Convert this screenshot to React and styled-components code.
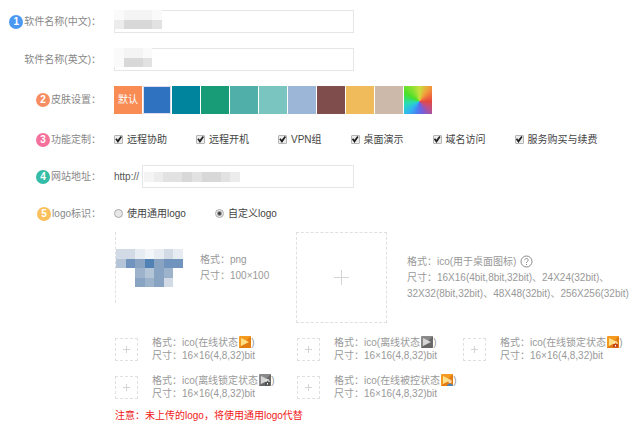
import styled, { createGlobalStyle, css } from "styled-components"
import React from 'react'

const skins = ['#2f73c0', '#00839c', '#189c78', '#50afa9', '#7ac5c0', '#9bb6d6', '#7f4e4c', '#f0bc5b', '#cdb9aa']

const features = ['远程协助', '远程开机', 'VPN组', '桌面演示', '域名访问', '服务购买与续费']

const icons = [
    { text: '在线状态', tone: 'orange' },
    { text: '离线状态', tone: 'gray' },
    { text: '在线锁定状态', tone: 'orange', mark: 'lock' },
    { text: '离线锁定状态', tone: 'gray', mark: 'lock' },
    { text: '在线被控状态', tone: 'orange', mark: 'user' },
]

// each string is a row of cells, each cell an index in the palette, "." is empty
const Mosaic = ({ rows, palette, width, height }) => {
    const cols = rows[0].length
    return (
        <svg width={width} height={height} viewBox={`0 0 ${cols} ${rows.length}`} preserveAspectRatio="none" shapeRendering="crispEdges" aria-hidden="true">
            {rows.map((row, y) => row.split('').map((c, x) => (
                c === '.' ? null : <rect key={`${x}-${y}`} x={x} y={y} width="1" height="1" fill={palette[c]} />
            )))}
        </svg>
    )
}

const grays = ['#fafafa', '#f4f4f4', '#ececec', '#e2e2e2', '#d8d8d8', '#cfcfcf']
const blues = ['#f3f6f9', '#e6ecf2', '#d2dbe5', '#b5c5d8', '#9db3cc', '#89a4c2', '#7094bd', '#5082b5']

const StateIcon = ({ tone, mark }) => {
    const gray = tone === 'gray'
    return (
        <StateSvg viewBox="0 0 12 12" aria-hidden="true">
            <rect x="0" y="0" width="12" height="12" rx="1" fill={gray ? '#8a8a8a' : '#f39a1f'} />
            <path d="M0 12 12 0v11a1 1 0 0 1-1 1z" fill={gray ? '#686868' : '#e37d12'} />
            <path d="M2 2 10 6 2 10z" fill={gray ? '#d6d6d6' : '#ffe08a'} />
            {mark === 'lock' && (
                <>
                    <path d="M7 8V7a1.500 1.500 0 0 1 3 0v1" fill="none" stroke={gray ? '#eee' : '#fff0d0'} strokeWidth="1" />
                    <rect x="6" y="8" width="5" height="3.500" fill={gray ? '#555' : '#c4471c'} />
                    <rect x="8" y="9" width="1" height="1.500" fill="#fff" />
                </>
            )}
            {mark === 'user' && (
                <>
                    <circle cx="9" cy="7.500" r="1.700" fill="#f6d9b0" />
                    <path d="M6 12c0-3.500 6-3.500 6 0z" fill="#4b83b8" />
                </>
            )}
        </StateSvg>
    )
}

const App = () => {
    return (
        <>
            <GlobalStyle />
            <Form>
                <Row>
                    <Label htmlFor="name-cn"><Badge $color="#4b98f3">1</Badge>软件名称(中文)：</Label>
                    <Field>
                        <Input id="name-cn" type="text" />
                        <Cover>
                            <Mosaic rows={['01110', '24443']} palette={grays} width={48} height={19} />
                        </Cover>
                    </Field>
                </Row>
                <Row>
                    <Label htmlFor="name-en">软件名称(英文)：</Label>
                    <Field>
                        <Input id="name-en" type="text" />
                        <Cover>
                            <Mosaic rows={['0110', '0443']} palette={grays} width={38} height={19} />
                        </Cover>
                    </Field>
                </Row>
                <Row>
                    <Label as="span"><Badge $color="#f78d62">2</Badge>皮肤设置：</Label>
                    <Skins>
                        <Skin type="button" $color="#f98b55">默认</Skin>
                        {skins.map((color, i) => (
                            <Skin key={color} type="button" $color={color} $active={i === 0} aria-label={color} />
                        ))}
                        <Skin type="button" $rainbow aria-label="自定义" />
                    </Skins>
                </Row>
                <Row>
                    <Label as="span"><Badge $color="#f4719c">3</Badge>功能定制：</Label>
                    <Options>
                        {features.map((text) => (
                            <Option key={text}>
                                <Checkbox type="checkbox" defaultChecked />
                                {text}
                            </Option>
                        ))}
                    </Options>
                </Row>
                <Row>
                    <Label htmlFor="site"><Badge $color="#35bca6">4</Badge>网站地址：</Label>
                    <Field>
                        <Prefix>http://</Prefix>
                        <UrlBox>
                            <Input id="site" type="text" />
                            <Cover $inset>
                                <Mosaic rows={['1233434432']} palette={grays} width={96} height={10} />
                            </Cover>
                        </UrlBox>
                    </Field>
                </Row>
                <Row>
                    <Label as="span"><Badge $color="#fac05c">5</Badge>logo标识：</Label>
                    <Options>
                        <Option><Radio type="radio" name="logo" />使用通用logo</Option>
                        <Option><Radio type="radio" name="logo" defaultChecked />自定义logo</Option>
                    </Options>
                </Row>
            </Form>
            <Uploads>
                <UploadGrid>
                    <LogoItem>
                        <LogoBox type="button" aria-label="png">
                            <Mosaic rows={['2210121', '3657566', '..4354.', '..5452.']} palette={blues} width={67} height={38} />
                        </LogoBox>
                        <Info>
                            格式：png<br />
                            尺寸：100×100
                        </Info>
                    </LogoItem>
                    <DesktopItem>
                        <BigBox type="button" aria-label="ico"><Plus $size={15} /></BigBox>
                        <Info>
                            格式：ico(用于桌面图标)
                            <HelpIcon viewBox="0 0 13 13" aria-hidden="true">
                                <circle cx="6.500" cy="6.500" r="5.500" />
                                <path d="M4.800 5.200a1.700 1.700 0 1 1 2.600 1.400c-.6.400-.9.700-.9 1.400M6.500 9v1" />
                            </HelpIcon><br />
                            尺寸：16X16(4bit,8bit,32bit)、24X24(32bit)、<br />
                            32X32(8bit,32bit)、48X48(32bit)、256X256(32bit)
                        </Info>
                    </DesktopItem>
                </UploadGrid>
                <IconGrid>
                    {icons.map(({ text, tone, mark }) => (
                        <IconItem key={text}>
                            <SmallBox type="button" aria-label={text}><Plus $size={7} /></SmallBox>
                            <Info $tight>
                                格式：ico({text}<StateIcon tone={tone} mark={mark} />)<br />
                                尺寸：16×16(4,8,32)bit
                            </Info>
                        </IconItem>
                    ))}
                </IconGrid>
                <Note>注意：未上传的logo，将使用通用logo代替</Note>
            </Uploads>
        </>
    )
}

const GlobalStyle = createGlobalStyle`
body {
    margin: 0;
    background: #fff;
    color: #444;
    font: 10px/16px "Liberation Sans", "Noto Sans CJK SC", sans-serif;
}

* {
    box-sizing: border-box;
}

button, input {
    margin: 0;
    padding: 0;
    font: inherit;
}
`

const Form = styled.form`
display: flex;
flex-direction: column;
gap: 15px;
padding-top: 10px;
`

const Row = styled.div`
display: grid;
grid-template-columns: 101px 1fr;
column-gap: 13px;
align-items: center;
min-height: 21px;
`

const Label = styled.label`
display: flex;
justify-content: flex-end;
align-items: center;
gap: 1px;
color: #888;
white-space: nowrap;
`

const Badge = styled.span`
width: 14px;
height: 14px;
border-radius: 50%;
background: ${({ $color }) => $color};
color: #fff;
font-weight: bold;
line-height: 14px;
text-align: center;
`

const Field = styled.div`
position: relative;
display: flex;
align-items: center;
gap: 3px;
max-width: 240px;
`

const UrlBox = styled.div`
position: relative;
display: flex;
flex: 1;
`

const Input = styled.input`
flex: 1;
min-width: 0;
height: 23px;
padding: 0 6px;
border: 1px solid #e6e6e6;
background: #fff;
outline: none;
`

const Cover = styled.span`
position: absolute;
top: ${({ $inset }) => $inset ? 7 : 0}px;
left: ${({ $inset }) => $inset ? 2 : 0}px;
display: flex;
pointer-events: none;
`

const Prefix = styled.span`
color: #555;
`

const Skins = styled.div`
display: flex;
gap: 1px;
`

const Skin = styled.button`
width: 28px;
height: 28px;
border: 0;
background: ${({ $color }) => $color};
color: #fff;
white-space: nowrap;

${({ $active }) => $active && css`
    border: 1px solid #dcdcec;
`}

${({ $rainbow }) => $rainbow && css`
    background: conic-gradient(from 0deg at 55% 55%, #c8e03c, #f0a03c 35deg, #f0703c 60deg, #e4483f 90deg, #c04f86 125deg, #6f60e0 165deg, #4a80f0 195deg, #30b4f0 225deg, #28dcb8 260deg, #48e028 300deg, #c8e03c);
`}
`

const Options = styled.div`
display: flex;
flex-wrap: wrap;
gap: 0 29px;
`

const Option = styled.label`
display: flex;
align-items: center;
gap: 4px;
white-space: nowrap;
`

const Checkbox = styled.input`
appearance: none;
display: flex;
width: 9px;
height: 9px;
border: 1px solid #b4b4b4;
border-radius: 1px;
background: #ececec;

&:checked::before {
    content: "";
    flex: 1;
    background: #222;
    clip-path: polygon(4% 48%, 22% 32%, 40% 54%, 82% 0, 100% 16%, 42% 100%);
}
`

const Radio = styled.input`
appearance: none;
width: 9px;
height: 9px;
border: 1px solid #aaa;
border-radius: 50%;
background: #e8e8e8;

&:checked {
    background: radial-gradient(circle, #444 1px, #eee 3px);
}
`

const Uploads = styled.section`
padding: 8px 0 0 115px;
color: #999;
`

const UploadGrid = styled.div`
display: grid;
grid-template-columns: 181px auto;
align-items: start;
`

const LogoItem = styled.div`
display: flex;
align-items: center;
gap: 14px;
`

const DesktopItem = styled.div`
display: flex;
align-items: center;
gap: 20px;
`

const UploadBox = styled.button`
display: flex;
flex-shrink: 0;
align-items: center;
justify-content: center;
border: 1px dashed #e0e0e0;
background: none;
`

const LogoBox = styled(UploadBox)`
justify-content: flex-start;
width: 71px;
height: 71px;
border-width: 0 0 0 1px;
`

const BigBox = styled(UploadBox)`
width: 91px;
height: 91px;
`

const SmallBox = styled(UploadBox)`
width: 23px;
height: 23px;
`

const Plus = styled.span`
width: ${({ $size }) => $size}px;
height: ${({ $size }) => $size}px;
background: linear-gradient(#d4d4d4, #d4d4d4) center / 100% 1px no-repeat, linear-gradient(#d4d4d4, #d4d4d4) center / 1px 100% no-repeat;
`

const Info = styled.p`
margin: 0;
line-height: ${({ $tight }) => $tight ? 13 : 16}px;
white-space: nowrap;
`

const HelpIcon = styled.svg`
width: 13px;
height: 13px;
margin-left: 4px;
vertical-align: middle;
fill: none;
stroke: #888;
`

const StateSvg = styled.svg`
width: 12px;
height: 12px;
margin-left: 1px;
vertical-align: top;
`

const IconGrid = styled.div`
display: grid;
grid-template-columns: 182px 166px auto;
row-gap: 12px;
margin-top: 13px;
`

const IconItem = styled.div`
display: flex;
align-items: center;
gap: 14px;
`

const Note = styled.p`
margin: 8px 0 0;
color: #f01818;
`

export default App
